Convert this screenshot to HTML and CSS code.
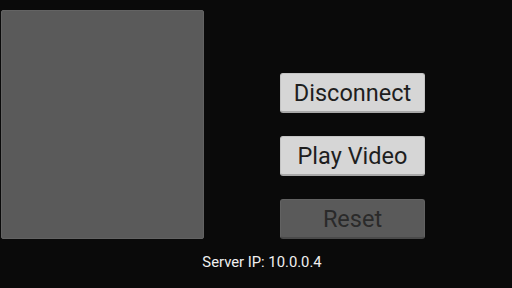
FILE: index.html
```
<!DOCTYPE html>
<html>
<head>
<meta charset="utf-8">
<link rel="stylesheet" href="styles.css">
</head>
<body>
<div class="screen">
  <div class="main">
    <div class="video-panel"></div>
    <div class="controls">
      <button class="btn">Disconnect</button>
      <button class="btn">Play Video</button>
      <button class="btn btn-disabled">Reset</button>
    </div>
  </div>
  <div class="footer">Server IP: 10.0.0.4</div>
</div>
</body>
</html>
```
FILE: styles.css
```
html, body {
  margin: 0;
  padding: 0;
  background: #0a0a0a;
}
.screen {
  width: 512px;
  height: 288px;
  overflow: hidden;
  background: #0a0a0a;
}
.main {
  display: flex;
  padding-top: 10px;
  padding-left: 1px;
}
.video-panel {
  width: 203px;
  height: 229px;
  box-sizing: border-box;
  background: #5a5a5a;
  border: 1px solid #636363;
  border-radius: 2px;
}
.controls {
  display: flex;
  flex-direction: column;
  gap: 23px;
  margin-left: 76px;
  padding-top: 63px;
}
.btn {
  width: 145px;
  height: 40px;
  box-sizing: border-box;
  margin: 0;
  padding: 2px 0 0 0;
  background: #d6d6d6;
  border: 1px solid #c4c4c4;
  border-bottom: 2px solid #a8a8a8;
  border-radius: 3px;
  font-family: Roboto, "Liberation Sans", sans-serif;
  font-weight: 400;
  font-size: 23.5px;
  color: #1e1e1e;
  line-height: 1;
}
.btn-disabled {
  background: #5a5a5a;
  border-color: #626262;
  border-bottom-color: #4a4a4a;
  color: #2a2a2a;
}
.footer {
  margin-top: 14px;
  padding-left: 12px;
  text-align: center;
  font-family: Roboto, "Liberation Sans", sans-serif;
  font-size: 14.8px;
  line-height: 18px;
  color: #f0f0f0;
}
```
